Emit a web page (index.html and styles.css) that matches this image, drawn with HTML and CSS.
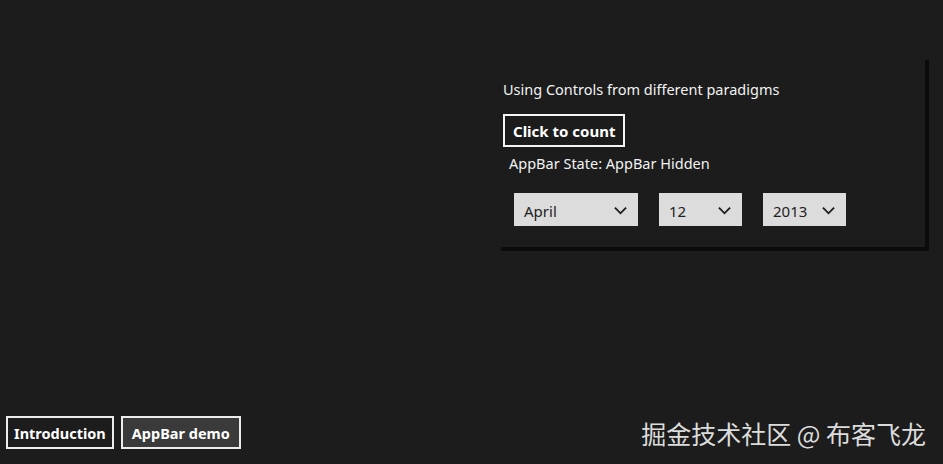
FILE: index.html
```html
<!DOCTYPE html>
<html lang="en">
<head>
    <meta charset="UTF-8">
    <title>AppBar demo</title>
    <link rel="stylesheet" href="styles.css">
</head>
<body>
    <div class="page">
        <div class="panel">
            <div class="panel-title">Using Controls from different paradigms</div>
            <button class="count-btn">Click to count</button>
            <div class="state">AppBar State: AppBar Hidden</div>
            <div class="pickers">
                <div class="picker month">
                    <span>April</span>
                    <svg class="chev" viewBox="0 0 14 9"><path d="M1 1.5 L7 7.5 L13 1.5" /></svg>
                </div>
                <div class="picker">
                    <span>12</span>
                    <svg class="chev" viewBox="0 0 14 9"><path d="M1 1.5 L7 7.5 L13 1.5" /></svg>
                </div>
                <div class="picker">
                    <span>2013</span>
                    <svg class="chev" viewBox="0 0 14 9"><path d="M1 1.5 L7 7.5 L13 1.5" /></svg>
                </div>
            </div>
        </div>

        <div class="footer">
            <div class="nav">
                <button class="nav-btn">Introduction</button>
                <button class="nav-btn active">AppBar demo</button>
            </div>
            <div class="watermark">掘金技术社区 @ 布客飞龙</div>
        </div>
    </div>
</body>
</html>
```

FILE: styles.css
```css
html, body {
    margin: 0;
    height: 100%;
}

body {
    background: #1c1c1c;
    color: #f2f2f2;
    font-family: "Noto Sans", "Open Sans", sans-serif;
}

.page {
    height: 464px;
    display: flex;
    flex-direction: column;
    justify-content: space-between;
}

.panel {
    margin: 56px 0 0 497px;
    width: 428px;
    height: 191px;
    box-sizing: border-box;
    padding: 23px 0 0 6px;
    box-shadow: 4px 4px 0 #0b0b0b;
}

.panel-title {
    font-size: 14.5px;
    line-height: 20px;
}

.count-btn {
    display: block;
    margin-top: 15px;
    height: 33px;
    padding: 0 8px;
    background: transparent;
    border: 2px solid #f5f5f5;
    color: #fff;
    font-family: inherit;
    font-size: 15px;
    font-weight: bold;
}

.state {
    margin: 6px 0 0 6px;
    font-size: 14.5px;
    line-height: 20px;
}

.pickers {
    display: flex;
    gap: 21px;
    margin: 20px 0 0 11px;
}

.picker {
    width: 83px;
    height: 33px;
    box-sizing: border-box;
    background: #dcdcdc;
    color: #222;
    display: flex;
    align-items: center;
    justify-content: space-between;
    padding: 2px 11px 0 10px;
    font-size: 15px;
}

.picker.month {
    width: 124px;
}

.chev {
    width: 13px;
    height: 9px;
    fill: none;
    stroke: #1a1a1a;
    stroke-width: 2;
}

.footer {
    display: flex;
    justify-content: space-between;
    align-items: flex-end;
    padding: 0 17px 15px 6px;
}

.nav {
    display: flex;
    gap: 7px;
}

.nav-btn {
    height: 33px;
    padding: 0 6px;
    background: #1c1c1c;
    border: 2px solid #ececec;
    color: #fff;
    font-family: inherit;
    font-size: 14.5px;
    font-weight: bold;
}

.nav-btn.active {
    padding: 0 9px;
    background: #3a3a3a;
}

.watermark {
    font-family: "Noto Sans CJK SC", sans-serif;
    font-size: 25px;
    line-height: 30px;
    color: #dcdcdc;
    margin-bottom: 1px;
}
```
